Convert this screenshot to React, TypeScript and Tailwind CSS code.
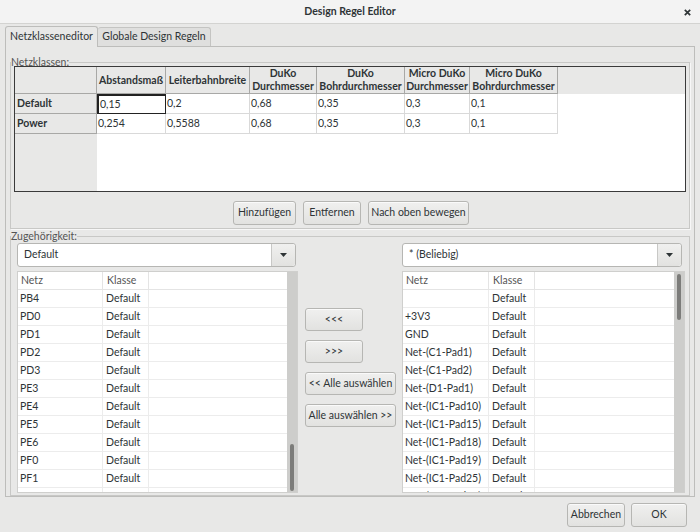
import React from "react";

const font = { fontFamily: "Lato, 'Noto Sans', sans-serif" };

function Btn({ children, w, h = 24 }: { children: React.ReactNode; w: number; h?: number }) {
  return (
    <div
      className="flex items-center justify-center rounded-[3px] border border-[#b6b6b3] bg-gradient-to-b from-[#f0f0ef] to-[#e2e2e0] text-[10.5px] text-[#2e3436] shadow-[inset_0_1px_0_#fafafa]"
      style={{ width: w, height: h }}
    >
      {children}
    </div>
  );
}

function Combo({ label, w }: { label: string; w: number }) {
  return (
    <div
      className="flex h-[24px] items-stretch rounded-[3px] border border-[#b6b6b3] bg-white text-[10.5px] text-[#2e3436]"
      style={{ width: w }}
    >
      <div className="flex flex-1 items-center pl-[6px]">{label}</div>
      <div className="flex w-[24px] items-center justify-center rounded-r-[3px] border-l border-[#c8c8c6] bg-gradient-to-b from-[#f0f0ef] to-[#e2e2e0]">
        <svg width="7" height="4" viewBox="0 0 7 4">
          <path d="M0 0 L7 0 L3.5 4 Z" fill="#2e3436" />
        </svg>
      </div>
    </div>
  );
}

function NetList({
  rows,
  w,
  c1,
  thumbTop,
  thumbH,
}: {
  rows: [string, string][];
  w: number;
  c1: number;
  thumbTop: number;
  thumbH: number;
}) {
  return (
    <div
      className="relative flex h-[222px] overflow-hidden border border-[#cfcfcd] bg-white text-[10.5px] text-[#2e3436]"
      style={{ width: w }}
    >
      <div className="flex-1 overflow-hidden">
        <div className="flex h-[18px] items-center border-b border-[#e4e4e4] text-[#555]">
          <div className="flex h-full items-center border-r border-[#e4e4e4] pl-[3px]" style={{ width: c1 }}>
            Netz
          </div>
          <div className="flex h-full w-[46px] items-center border-r border-[#e4e4e4] pl-[4px]">Klasse</div>
        </div>
        {rows.map(([n, k], i) => (
          <div key={i} className="flex h-[18px] items-center border-b border-[#ececec]">
            <div className="flex h-full items-center border-r border-[#ececec] pl-[2px]" style={{ width: c1 }}>
              {n}
            </div>
            <div className="flex h-full w-[46px] items-center border-r border-[#ececec] pl-[3px]">{k}</div>
          </div>
        ))}
      </div>
      <div className="relative w-[10px] bg-[#cdcdcb]">
        <div
          className="absolute left-[3px] w-[4px] rounded-full bg-[#7c7c7a]"
          style={{ top: thumbTop, height: thumbH }}
        />
      </div>
    </div>
  );
}

const leftRows: [string, string][] = [
  ["PB4", "Default"],
  ["PD0", "Default"],
  ["PD1", "Default"],
  ["PD2", "Default"],
  ["PD3", "Default"],
  ["PE3", "Default"],
  ["PE4", "Default"],
  ["PE5", "Default"],
  ["PE6", "Default"],
  ["PF0", "Default"],
  ["PF1", "Default"],
  ["", ""],
];

const rightRows: [string, string][] = [
  ["", "Default"],
  ["+3V3", "Default"],
  ["GND", "Default"],
  ["Net-(C1-Pad1)", "Default"],
  ["Net-(C1-Pad2)", "Default"],
  ["Net-(D1-Pad1)", "Default"],
  ["Net-(IC1-Pad10)", "Default"],
  ["Net-(IC1-Pad15)", "Default"],
  ["Net-(IC1-Pad18)", "Default"],
  ["Net-(IC1-Pad19)", "Default"],
  ["Net-(IC1-Pad25)", "Default"],
  ["Net-(IC1-Pad26)", "Default"],
];

const cols: { w: number; lines: string[] }[] = [
  { w: 69, lines: ["Abstandsmaß"] },
  { w: 84, lines: ["Leiterbahnbreite"] },
  { w: 67, lines: ["DuKo", "Durchmesser"] },
  { w: 88, lines: ["DuKo", "Bohrdurchmesser"] },
  { w: 65, lines: ["Micro DuKo", "Durchmesser"] },
  { w: 88, lines: ["Micro DuKo", "Bohrdurchmesser"] },
];

const data = [
  ["Default", "0,15", "0,2", "0,68", "0,35", "0,3", "0,1"],
  ["Power", "0,254", "0,5588", "0,68", "0,35", "0,3", "0,1"],
];

export default function App() {
  return (
    <div className="flex h-[532px] w-[700px] flex-col bg-[#e8e8e7] text-[#2e3436]" style={font}>
      {/* title bar */}
      <div className="relative flex h-[24px] shrink-0 items-center justify-center border-b border-[#d3d3d1] bg-[#f3f3f3]">
        <span className="text-[10.5px] font-bold">Design Regel Editor</span>
        <svg className="absolute right-[9px] top-[9px]" width="7" height="7" viewBox="0 0 7 7">
          <path d="M0.8 0.8 L6.2 6.2 M6.2 0.8 L0.8 6.2" stroke="#2e3436" strokeWidth="1.7" />
        </svg>
      </div>

      <div className="flex flex-col px-[5px] pt-[2px]">
        {/* tabs */}
        <div className="flex h-[20px] items-end">
          <div className="relative z-10 -mb-px flex h-[21px] w-[93px] items-center justify-center rounded-t-[3px] border border-b-0 border-[#bdbdbb] bg-[#e8e8e7] text-[10.5px]">
            Netzklasseneditor
          </div>
          <div className="flex h-[19px] w-[113px] items-center justify-center rounded-t-[3px] border border-b-0 border-l-0 border-[#c4c4c2] bg-[#dfdfde] text-[10.5px]">
            Globale Design Regeln
          </div>
        </div>

        {/* panel */}
        <div className="flex h-[451px] flex-col border border-[#bdbdbb] px-[4px] pt-[9px]">
          {/* Netzklassen group */}
          <fieldset className="m-0 min-w-0 border border-[#c8c8c6] px-[3px] pb-[36px] pt-0 shadow-[1px_1px_0_#f7f7f7]">
            <legend className="-ml-[3px] px-0 text-[10.5px] leading-[12px] text-[#555]">Netzklassen:</legend>
            <div className="-mt-[2px] flex h-[126px] flex-col border border-[#3a3a3a] bg-white text-[10.5px]">
              <div className="flex h-[27px] shrink-0 bg-[#e8e8e7]">
                <div className="w-[82px] border-r border-b border-[#a8a8a6]" />
                {cols.map((c, i) => (
                  <div
                    key={i}
                    className="flex flex-col items-center justify-center border-r border-b border-[#a8a8a6] font-bold leading-[13px]"
                    style={{ width: c.w }}
                  >
                    {c.lines.map((l) => (
                      <span key={l}>{l}</span>
                    ))}
                  </div>
                ))}
              </div>
              {data.map((r, ri) => (
                <div key={ri} className="flex h-[20px] shrink-0">
                  <div className="flex w-[82px] items-center border-r border-b border-[#a8a8a6] bg-[#e8e8e7] pl-[2px] font-bold">
                    {r[0]}
                  </div>
                  {cols.map((c, i) => (
                    <div
                      key={i}
                      className={
                        "flex items-center border-r border-b pl-[1px] " +
                        (ri === 0 && i === 0 ? "border-2 border-[#222]" : "border-[#d9d9d9]")
                      }
                      style={{ width: c.w }}
                    >
                      {r[i + 1]}
                    </div>
                  ))}
                </div>
              ))}
              <div className="flex flex-1">
                <div className="w-[82px] bg-[#e8e8e7]" />
              </div>
            </div>
          </fieldset>

          {/* buttons */}
          <div className="relative -mt-[28px] mb-[5px] flex justify-center gap-[7px] pl-[2px]">
            <Btn w={63}>Hinzufügen</Btn>
            <Btn w={58}>Entfernen</Btn>
            <Btn w={101}>Nach oben bewegen</Btn>
          </div>

          {/* Zugehörigkeit group */}
          <fieldset className="m-0 flex min-w-0 flex-1 border border-[#c8c8c6] px-[6px] pb-[1px] pt-0">
            <legend className="-ml-[6px] px-0 text-[10.5px] leading-[12px] text-[#555]">Zugehörigkeit:</legend>
            <div className="flex w-full gap-[6px] pt-[1px]">
              <div className="flex flex-col gap-[4px]">
                <Combo label="Default" w={279} />
                <NetList rows={leftRows} w={281} c1={85} thumbTop={172} thumbH={47} />
              </div>
              <div className="flex w-[98px] flex-col gap-[9px] pt-[65px] pl-[1px]">
                <Btn w={58} h={23}>&lt;&lt;&lt;</Btn>
                <Btn w={58} h={23}>&gt;&gt;&gt;</Btn>
                <Btn w={91} h={23}>&lt;&lt; Alle auswählen</Btn>
                <Btn w={91} h={23}>Alle auswählen &gt;&gt;</Btn>
              </div>
              <div className="flex flex-col gap-[4px]">
                <Combo label="* (Beliebig)" w={280} />
                <NetList rows={rightRows} w={283} c1={86} thumbTop={2} thumbH={46} />
              </div>
            </div>
          </fieldset>
        </div>

        {/* bottom buttons */}
        <div className="mt-[6px] flex justify-end gap-[6px] pr-[8px]">
          <Btn w={58}>Abbrechen</Btn>
          <Btn w={56}>OK</Btn>
        </div>
      </div>
    </div>
  );
}
